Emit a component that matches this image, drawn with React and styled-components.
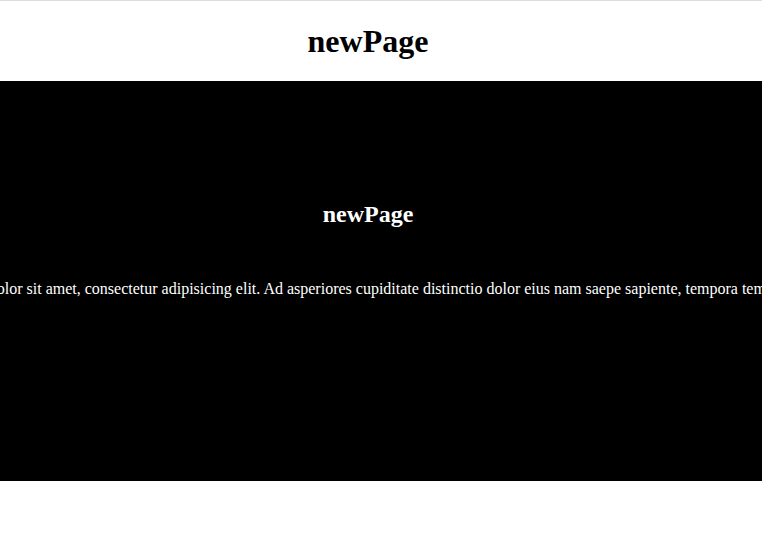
import React from "react";
import styled, { createGlobalStyle } from "styled-components";

const GlobalStyle = createGlobalStyle`
  html, body {
    margin: 0;
    padding: 0;
    background: #fff;
    font-family: "Liberation Serif", "Times New Roman", serif;
    overflow: hidden;
  }
`;

function App() {
  return (
    <>
      <GlobalStyle />
      <Page>
        <Header>
          <Title>newPage</Title>
        </Header>
        <Hero>
          <HeroTitle>newPage</HeroTitle>
          <HeroText>
            Lorem ipsum dolor sit amet, consectetur adipisicing elit. Ad
            asperiores cupiditate distinctio dolor eius nam saepe sapiente,
            tempora temporibus ab.
          </HeroText>
        </Hero>
      </Page>
    </>
  );
}

export default App;

const Page = styled.div`
  width: 100%;
  border-top: 1px solid #dcdcdf;
`;

const Header = styled.header`
  height: 80px;
  box-sizing: border-box;
  padding-right: 26px;
  display: flex;
  align-items: center;
  justify-content: center;
  background: #fff;
`;

const Title = styled.h1`
  margin: 0;
  font-size: 32px;
  font-weight: 700;
  color: #000;
`;

const Hero = styled.section`
  height: 400px;
  box-sizing: border-box;
  padding: 120px 26px 0 0;
  background: #000;
  color: #fff;
  display: flex;
  flex-direction: column;
  align-items: center;
  gap: 52px;
  overflow: hidden;
`;

const HeroTitle = styled.h2`
  margin: 0;
  font-size: 24px;
  font-weight: 700;
`;

const HeroText = styled.p`
  margin: 0;
  font-size: 16px;
  white-space: nowrap;
`;
